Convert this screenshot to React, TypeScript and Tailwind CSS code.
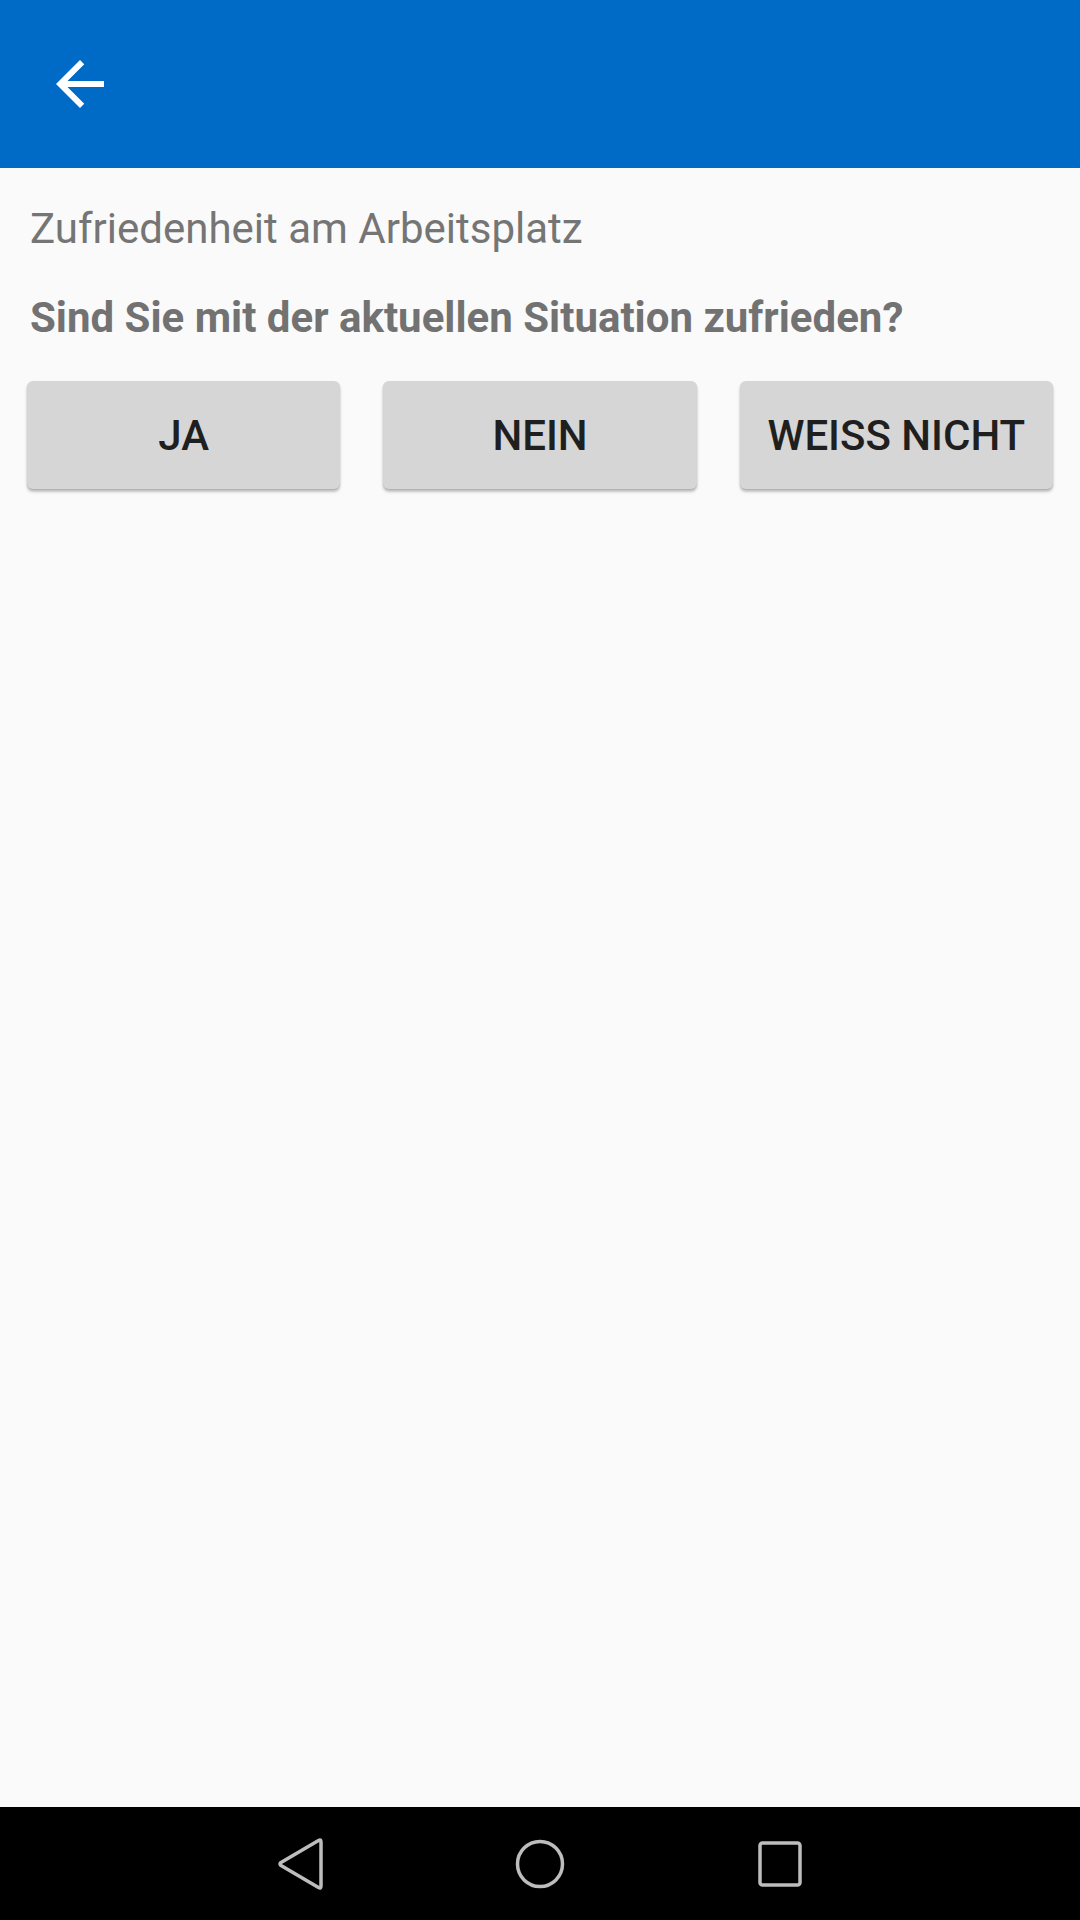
const options = ['JA', 'NEIN', 'WEISS NICHT'];

function BackArrow() {
  return (
    <svg width="72" height="72" viewBox="0 0 24 24" fill="#ffffff">
      <path d="M20 11H7.83l5.59-5.59L12 4l-8 8 8 8 1.41-1.41L7.83 13H20v-2z" />
    </svg>
  );
}

function NavBar() {
  return (
    <div className="h-[113px] bg-black flex items-center justify-center gap-[180px]">
      {/* back */}
      <svg width="60" height="60" viewBox="0 0 60 60" fill="none" stroke="#bdbdbd" strokeWidth="3.5" strokeLinejoin="round">
        <path d="M51 8 L51 52 Q51 55 48.5 53.5 L11 31.5 Q9 30 11 28.5 L48.5 6.5 Q51 5 51 8 Z" />
      </svg>
      {/* home */}
      <svg width="60" height="60" viewBox="0 0 60 60" fill="none" stroke="#bdbdbd" strokeWidth="3.5">
        <circle cx="30" cy="30" r="22.5" />
      </svg>
      {/* recents */}
      <svg width="60" height="60" viewBox="0 0 60 60" fill="none" stroke="#bdbdbd" strokeWidth="3.5">
        <rect x="10" y="9" width="40" height="42" rx="2.5" />
      </svg>
    </div>
  );
}

export default function App() {
  return (
    <div
      className="w-[1080px] h-[1920px] flex flex-col bg-[#fafafa]"
      style={{ fontFamily: 'Roboto, "Noto Sans", sans-serif' }}
    >
      {/* Toolbar */}
      <div className="h-[168px] bg-[#006bc6] flex items-center pl-[44px] shrink-0">
        <BackArrow />
      </div>

      {/* Content */}
      <div className="flex-1 flex flex-col">
        <div className="px-[30px] pt-[36px]">
          <p className="text-[42px] leading-[49px] text-[#757575]">Zufriedenheit am Arbeitsplatz</p>
          <p className="mt-[40px] text-[42px] leading-[49px] font-bold text-[#727272]">
            Sind Sie mit der aktuellen Situation zufrieden?
          </p>
        </div>

        <div className="flex gap-[43px] px-[27px] mt-[39px]">
          {options.map((opt) => (
            <button
              key={opt}
              className="flex-1 h-[108px] rounded-[6px] bg-[#d6d6d6] text-[42px] font-medium text-[#1f1f1f] shadow-[0_3px_3px_rgba(0,0,0,0.22),0_1px_2px_rgba(0,0,0,0.12)]"
            >
              {opt}
            </button>
          ))}
        </div>
      </div>

      <NavBar />
    </div>
  );
}
